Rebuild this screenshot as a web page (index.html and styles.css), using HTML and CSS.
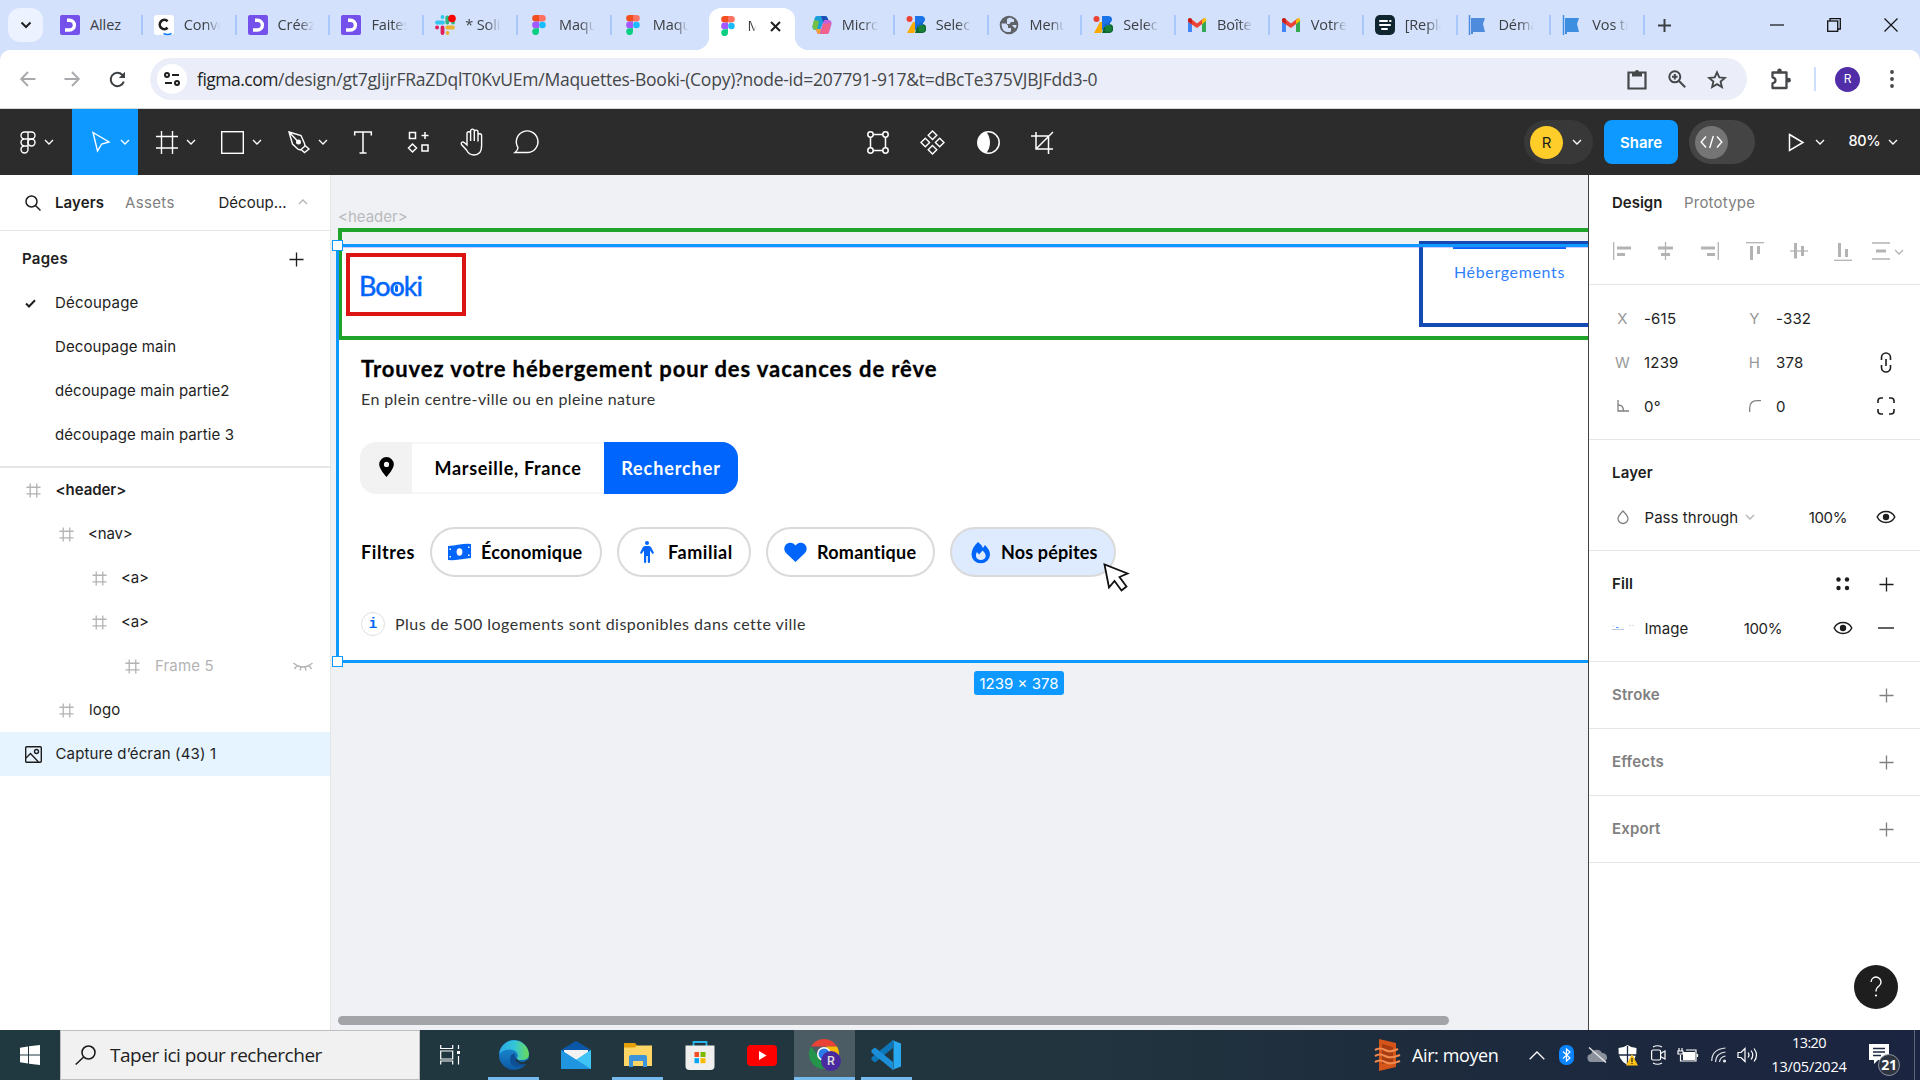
FILE: index.html
```html
<!DOCTYPE html>
<html lang="fr">
<head>
<meta charset="utf-8">
<title>Maquettes Booki</title>
<link rel="stylesheet" href="styles.css">
</head>
<body>
<svg class="defs" width="0" height="0">
  <symbol id="chev" viewBox="0 0 10 6"><path d="M1 1l4 4 4-4" fill="none" stroke="currentColor" stroke-width="1.3"/></symbol>
  <symbol id="plus" viewBox="0 0 16 16"><path d="M8 .5v15M.5 8h15" fill="none" stroke="currentColor" stroke-width="1.4"/></symbol>
  <symbol id="hash" viewBox="0 0 16 16"><path d="M4.5 .5v15M11.5 .5v15M.5 4.5h15M.5 11.5h15" fill="none" stroke="#b3b3b3" stroke-width="1.4"/></symbol>
  <symbol id="eye" viewBox="0 0 20 14"><path d="M1.200 7C3 3.400 6.200 1.500 10 1.500S17 3.400 18.800 7C17 10.600 13.800 12.500 10 12.500S3 10.600 1.200 7z" fill="none" stroke="#1e1e1e" stroke-width="1.500"/><circle cx="10" cy="7" r="3.200" fill="#1e1e1e"/></symbol>
  <symbol id="figma" viewBox="0 0 14 20"><path d="M3.500 0H7v6.600H3.500a3.300 3.300 0 0 1 0-6.600z" fill="#f24e1e"/><path d="M7 0h3.500a3.300 3.300 0 0 1 0 6.600H7z" fill="#ff7262"/><path d="M3.500 6.600H7v6.700H3.500a3.300 3.300 0 0 1 0-6.700z" fill="#a259ff"/><circle cx="10.400" cy="10" r="3.300" fill="#1abcfe"/><path d="M3.500 13.300H7v3.300a3.400 3.400 0 1 1-3.500-3.300z" fill="#0acf83"/></symbol>
  <symbol id="oc" viewBox="0 0 20 20"><rect width="20" height="20" rx="2" fill="#7451eb"/><path d="M7 5.200h2.500a4.900 4.900 0 0 1 0 9.800H5" fill="none" stroke="#fff" stroke-width="3.400"/></symbol>
  <symbol id="ads" viewBox="0 0 20 20"><path d="M7 7h6L8 18H1z" fill="#f9ab00"/><path d="M9 1h7a3.500 3.500 0 0 1 2 6l-8 8H9z" fill="#1a73e8"/><path d="M12 9h4a4.500 4.500 0 0 1 0 9H9z" fill="#0d652d"/><path d="M10 11l7-5v9z" fill="#1967d2"/><circle cx="3.500" cy="4" r="3" fill="#ea4335"/><circle cx="15.500" cy="13.500" r="3.500" fill="#188038"/></symbol>
  <symbol id="gmail" viewBox="0 0 20 16"><path d="M1 3v12h4V6z" fill="#4285f4"/><path d="M19 3v12h-4V6z" fill="#34a853"/><path d="M1 2.500L3 1l7 5.500L17 1v4.500l-7 5.500L1 5z" fill="#ea4335"/><path d="M15 3l2-2c2 0 2.500 1.500 2 3l-4 3z" fill="#fbbc04"/><path d="M1 2c1-1.500 3-1 4 0v5L1 4.500z" fill="#c5221f"/></symbol>
  <symbol id="flag" viewBox="0 0 20 20"><path d="M3 3h14l-2 6 2 8H5v2H3z" fill="currentColor"/><path d="M1.500 0v20" stroke="currentColor" stroke-width="1.500"/></symbol>
</svg>

<div class="tabstrip">
  <div class="tabsearch"><svg width="12" height="8" viewBox="0 0 12 8"><path d="M1.500 1.500L6 6l4.500-4.500" fill="none" stroke="#1f1f1f" stroke-width="2"/></svg></div>
  <div class="tab"><svg class="fav"><use href="#oc"/></svg><span>Allez</span></div>
  <div class="tab"><svg class="fav" viewBox="0 0 20 20"><rect width="20" height="20" rx="3" fill="#fff"/><path d="M13.600 6.200A4.600 4.600 0 1 0 13.600 12.800" fill="none" stroke="#1d1d1b" stroke-width="2.600"/><path d="M9.500 18.500q4 2 8 0" fill="none" stroke="#0a7cff" stroke-width="1.700"/></svg><span>Conve</span></div>
  <div class="tab"><svg class="fav"><use href="#oc"/></svg><span>Créez</span></div>
  <div class="tab"><svg class="fav"><use href="#oc"/></svg><span>Faites</span></div>
  <div class="tab"><svg class="fav" viewBox="0 0 20 20" fill="none" stroke-width="3.800" stroke-linecap="round"><path d="M2 7.500h6M7.500 2v.2" stroke="#36c5f0"/><path d="M12.300 2.500v5M18 7.500h.1" stroke="#2eb67d"/><path d="M12.300 12.500h5.700M12.500 18v-.1" stroke="#ecb22e"/><path d="M7.500 12.500v5.500M2 12.500h.1" stroke="#e01e5a"/><circle cx="17" cy="3.500" r="3.800" fill="#f00" stroke="none"/></svg><span>* Soli</span></div>
  <div class="tab"><svg class="fav"><use href="#figma"/></svg><span>Maqu</span></div>
  <div class="tab nosep"><svg class="fav"><use href="#figma"/></svg><span>Maqu</span></div>
  <div class="tab active nosep"><svg class="fav"><use href="#figma"/></svg><span>M</span><svg class="x" width="11" height="11" viewBox="0 0 11 11"><path d="M1 1l9 9M10 1l-9 9" stroke="#1f1f1f" stroke-width="2"/></svg></div>
  <div class="tab"><svg class="fav" viewBox="0 0 20 20"><path d="M5 1h8q2 0 2.500 2L17 6h-5L8 15H4q-4 0-3.500-4L2.500 4Q3 1 5 1z" fill="#1a9fd8"/><path d="M2 5l5 1-2 9q-5 0-4.500-4z" fill="#75c043"/><path d="M9 1h4q2 0 2.500 2L17 7h-6z" fill="#1c4fb5"/><path d="M15 19H7q-2 0-2.500-3L4 14h5l3-9h4q4 0 3.500 4l-2 7q-.5 3-2.500 3z" fill="#c55fd8"/><path d="M11 9l8-1-2 8q-.5 3-2.500 3H9z" fill="#f0628a"/><path d="M4 14h5l-1 5q-3 0-3.500-3z" fill="#f9a12e"/></svg><span>Micro</span></div>
  <div class="tab"><svg class="fav"><use href="#ads"/></svg><span>Selec</span></div>
  <div class="tab"><svg class="fav" viewBox="0 0 20 20"><circle cx="10" cy="10" r="9.300" fill="#5f6368"/><path d="M2.500 8.500h4.500l2 2v2.500h3v3.500q-7 2-9-4zM8 4l3-1.500 4 2v2.500h-3l-1.500 2H8V6z M13 10h4.500q0 2-1.500 3.500z" fill="#d3e1fd"/></svg><span>Menu</span></div>
  <div class="tab"><svg class="fav"><use href="#ads"/></svg><span>Selec</span></div>
  <div class="tab"><svg class="fav"><use href="#gmail"/></svg><span>Boîte</span></div>
  <div class="tab"><svg class="fav"><use href="#gmail"/></svg><span>Votre</span></div>
  <div class="tab"><svg class="fav" viewBox="0 0 20 20"><rect width="20" height="20" rx="5" fill="#0f2530"/><path d="M5 6h7M15 6h.6M5 10h10M7 14h5" stroke="#fff" stroke-width="2" stroke-linecap="round"/></svg><span>[Repla</span></div>
  <div class="tab c1"><svg class="fav"><use href="#flag"/></svg><span>Déma</span></div>
  <div class="tab c2"><svg class="fav"><use href="#flag"/></svg><span>Vos tr</span></div>
  <svg class="newtab" width="13" height="13" viewBox="0 0 13 13"><path d="M6.500 0v13M0 6.500h13" stroke="#3c4043" stroke-width="2"/></svg>
  <div class="winctl">
    <svg width="14" height="14" viewBox="0 0 14 14"><path d="M0 7h14" stroke="#111" stroke-width="1.200"/></svg>
    <svg width="14" height="14" viewBox="0 0 14 14" fill="none" stroke="#111" stroke-width="1.300"><rect x=".7" y="3" width="10" height="10.300"/><path d="M3 3V.7h10.300V11H11"/></svg>
    <svg width="14" height="14" viewBox="0 0 14 14"><path d="M.5 .5l13 13M13.500 .5l-13 13" stroke="#111" stroke-width="1.200"/></svg>
  </div>
</div>

<div class="navbar-bg"><div class="navbar">
  <svg class="n1" width="16" height="16" viewBox="0 0 16 16"><path d="M15.500 8H1.500M8 1L1.200 8 8 15" fill="none" stroke="#a9aaae" stroke-width="1.900"/></svg>
  <svg class="n2" width="16" height="16" viewBox="0 0 16 16"><path d="M.5 8h14M8 1l6.800 7L8 15" fill="none" stroke="#a9aaae" stroke-width="1.900"/></svg>
  <svg class="n3" width="17" height="17" viewBox="0 0 17 17"><path d="M14.800 10.500A6.700 6.700 0 1 1 13.200 3.800L15 5.600" fill="none" stroke="#3c4043" stroke-width="2"/><path d="M16 .8V7H9.800z" fill="#3c4043"/></svg>
  <div class="omni">
    <div class="site"><svg width="16" height="14" viewBox="0 0 16 14" fill="none" stroke="#1f1f1f" stroke-width="2"><circle cx="3" cy="3" r="2"/><path d="M8 3h7M1 11h7"/><circle cx="13" cy="11" r="2"/></svg></div>
    <span class="url"><b>figma.com</b>/design/gt7gJijrFRaZDqlT0KvUEm/Maquettes-Booki-(Copy)?node-id=207791-917&amp;t=dBcTe375VJBJFdd3-0</span>
    <svg width="20" height="21" viewBox="0 0 20 21"><path d="M1.500 3.500h17v16h-17z" fill="none" stroke="#45474a" stroke-width="2.200"/><path d="M5 3h3a2 2 0 0 1 4 0h3v4.500H5z" fill="#45474a"/></svg>
    <svg width="18" height="18" viewBox="0 0 18 18" fill="none" stroke="#45474a" stroke-width="2"><circle cx="6.800" cy="6.800" r="5.500"/><path d="M11 11l6.200 6.200M6.800 4v5.600M4 6.800h5.600"/></svg>
    <svg width="20" height="19" viewBox="0 0 20 19"><path d="M10 2.300l2.300 5.100 5.500.5-4.200 3.700 1.300 5.500L10 14.200l-4.900 2.900 1.300-5.500L2.200 7.900l5.500-.5z" fill="none" stroke="#45474a" stroke-width="1.900"/></svg>
  </div>
  <svg class="puz" width="22" height="22" viewBox="0 0 22 22"><path d="M2.500 4.500h14V20h-14v-4.700q3-.7 3-3t-3-3z" fill="none" stroke="#45474a" stroke-width="2.300" stroke-linejoin="round"/><circle cx="9.500" cy="2.900" r="2.300" fill="#45474a"/><circle cx="18.500" cy="12.200" r="2.400" fill="#45474a"/></svg>
  <i class="nsep"></i>
  <div class="prof">R</div>
  <svg class="dots" width="4" height="18" viewBox="0 0 4 18" fill="#45474a"><circle cx="2" cy="2" r="1.900"/><circle cx="2" cy="9" r="1.900"/><circle cx="2" cy="16" r="1.900"/></svg>
</div></div>

<div class="ftool">
  <div class="tl">
    <div class="ti w72"><svg width="16" height="23" viewBox="0 0 16 23" fill="none" stroke="#fff" stroke-width="1.400"><path d="M8 1H4.500a3.400 3.400 0 0 0 0 7H8zM8 1h3.500a3.400 3.400 0 0 1 0 7H8zM8 8H4.500a3.400 3.400 0 0 0 0 7H8zM8 15H4.500A3.500 3.500 0 1 0 8 18.500z"/><circle cx="11.500" cy="11.500" r="3.500"/></svg><svg class="cv"><use href="#chev"/></svg></div>
    <div class="ti w66 sel"><svg width="20" height="22" viewBox="0 0 20 22"><path d="M2 1.500L18 11l-7.300 2L6.500 20z" fill="none" stroke="#fff" stroke-width="1.400"/></svg><svg class="cv"><use href="#chev"/></svg></div>
    <div class="ti w66 o1"><svg width="22" height="23" viewBox="0 0 22 23"><path d="M5.500 0v23M16.500 0v23M0 5.500h22M0 17h22" stroke="#fff" stroke-width="1.400"/></svg><svg class="cv"><use href="#chev"/></svg></div>
    <div class="ti w66 o1"><svg width="23" height="23" viewBox="0 0 23 23"><rect x=".7" y=".7" width="21.600" height="21.600" fill="none" stroke="#fff" stroke-width="1.400"/></svg><svg class="cv"><use href="#chev"/></svg></div>
    <div class="ti w66 o1"><svg width="22" height="22" viewBox="0 0 22 22" fill="none" stroke="#fff" stroke-width="1.400"><path d="M1 1l12 3.500 3.500 8 .5 2.500-4.500 4-2.500-.8L4.500 13zM1 1l9 9.500M17 14.500l4 3.500-4.500 3.500-3.500-3"/><circle cx="10.500" cy="11" r="1.800" fill="#fff"/></svg><svg class="cv"><use href="#chev"/></svg></div>
    <div class="ti w55"><svg width="18" height="23" viewBox="0 0 18 23"><path d="M.7 4.500V.9h16.600v3.600M9 1v21M5.500 22h7" fill="none" stroke="#fff" stroke-width="1.500"/></svg></div>
    <div class="ti w55 s1"><svg width="22" height="22" viewBox="0 0 22 22" fill="none" stroke="#fff" stroke-width="1.500"><path d="M1.500 1.500h6v6h-6zM14 14h6v6h-6zM4.500 13l4 4-4 4-4-4zM17 1v7M13.500 4.500h7"/></svg></div>
    <div class="ti w55 s1"><svg width="26" height="28" viewBox="0 0 26 28" fill="none" stroke="#fff" stroke-width="1.400"><path d="M7 16V5.500a1.800 1.800 0 0 1 3.600 0V13 3a1.800 1.800 0 0 1 3.700 0v10V4a1.800 1.800 0 0 1 3.700 0v9.500V7.500a1.800 1.800 0 0 1 3.600 0V18c0 6-3 9-7.600 9-4 0-6-2-7.500-5L1.500 16.500c-1-2 1-3.500 3-1.800L7 17z"/></svg></div>
    <div class="ti w55"><svg width="26" height="24" viewBox="0 0 26 24"><path d="M1 22.500c2-1.500 3-3 3-5A10.800 10.800 0 1 1 14 22.500z" fill="none" stroke="#fff" stroke-width="1.400"/></svg></div>
  </div>
  <div class="tm">
    <svg width="22" height="23" viewBox="0 0 22 23" fill="none" stroke="#fff" stroke-width="1.500"><path d="M6 3.500h10M6 19.500h10M3.500 6v11M18.500 6v11"/><circle cx="3.500" cy="3.500" r="2.700"/><circle cx="18.500" cy="3.500" r="2.700"/><circle cx="3.500" cy="19.500" r="2.700"/><circle cx="18.500" cy="19.500" r="2.700"/></svg>
    <svg width="25" height="25" viewBox="0 0 25 25" fill="none" stroke="#fff" stroke-width="1.400"><path d="M12.500 1l4.300 4.300-4.300 4.300-4.300-4.300zM12.500 15.400l4.300 4.300-4.300 4.300-4.300-4.300zM5.300 8.200l4.300 4.300-4.300 4.300L1 12.500zM19.700 8.200l4.300 4.300-4.300 4.300-4.300-4.300z"/></svg>
    <svg width="23" height="23" viewBox="0 0 23 23"><circle cx="11.500" cy="11.500" r="10.700" fill="none" stroke="#fff" stroke-width="1.500"/><path d="M9.500 1a10.700 10.700 0 0 0 0 21q3.500-5 3.500-10.500T9.500 1z" fill="#fff"/></svg>
    <svg width="23" height="23" viewBox="0 0 23 23" fill="none" stroke="#fff" stroke-width="1.500"><path d="M0 5h17.500v18M5 1v17h17M5 18L22 1"/></svg>
  </div>
  <div class="tr">
    <div class="people"><div class="av">R</div><svg class="cv"><use href="#chev"/></svg></div>
    <div class="share"><span>Share</span></div>
    <div class="dev"><div class="knob"><svg width="23" height="14" viewBox="0 0 23 14"><path d="M6 1.500L1.200 7 6 12.500M17 1.500L21.800 7 17 12.500M13.300 1L9.700 13" fill="none" stroke="#fff" stroke-width="1.400"/></svg></div></div>
    <svg class="play" width="17" height="19" viewBox="0 0 17 19"><path d="M1.500 1.500L15 9.500l-13.500 8z" fill="none" stroke="#fff" stroke-width="1.500"/></svg><svg class="cv"><use href="#chev"/></svg>
    <span class="zoom">80%</span><svg class="cv"><use href="#chev"/></svg>
  </div>
</div>

<div class="main">
  <div class="left">
    <div class="ltabs"><svg width="16" height="16" viewBox="0 0 16 16" fill="none" stroke="#1e1e1e" stroke-width="1.500"><circle cx="6.500" cy="6.500" r="5.500"/><path d="M10.500 10.500l5 5"/></svg><b>Layers</b><span class="as">Assets</span><span class="pg">Découp...</span><svg class="cv up"><use href="#chev"/></svg></div>
    <div class="pages">
      <div class="prow ph"><b>Pages</b><svg class="pl"><use href="#plus"/></svg></div>
      <div class="prow"><svg class="ck" width="11" height="9" viewBox="0 0 11 9"><path d="M1 4.500l3 3L10 1.200" fill="none" stroke="#1e1e1e" stroke-width="2"/></svg><span class="p1">Découpage</span></div>
      <div class="prow"><span>Decoupage main</span></div>
      <div class="prow"><span>découpage main partie2</span></div>
      <div class="prow"><span>découpage main partie 3</span></div>
    </div>
    <div class="layers">
      <div class="lrow d0"><svg class="hs"><use href="#hash"/></svg><b>&lt;header&gt;</b></div>
      <div class="lrow d1 tag"><svg class="hs"><use href="#hash"/></svg><span>&lt;nav&gt;</span></div>
      <div class="lrow d2 tag"><svg class="hs"><use href="#hash"/></svg><span>&lt;a&gt;</span></div>
      <div class="lrow d2 tag"><svg class="hs"><use href="#hash"/></svg><span>&lt;a&gt;</span></div>
      <div class="lrow d3"><svg class="hs"><use href="#hash"/></svg><span>Frame 5</span><svg class="closed" width="20" height="10" viewBox="0 0 20 10"><path d="M.5 2q9.500 8 19 0M4 4.500L1.500 8M8 6l-1 3.500M12 6l1 3.500M16 4.500L18.500 8" fill="none" stroke="#b3b3b3" stroke-width="1.300"/></svg></div>
      <div class="lrow d1"><svg class="hs"><use href="#hash"/></svg><span>logo</span></div>
      <div class="lrow d0 on"><svg class="im" width="17" height="17" viewBox="0 0 17 17" fill="none" stroke="#1e1e1e" stroke-width="1.400"><rect x=".7" y=".7" width="15.600" height="15.600" rx="1"/><circle cx="11.500" cy="5.500" r="2"/><path d="M1 12l4.500-4.500L13.500 16"/></svg><span>Capture d’écran (43) 1</span></div>
    </div>
  </div>

  <div class="canvas">
    <span class="flabel">&lt;header&gt;</span>
    <div class="shot">
      <span class="heb">Hébergements</span>
      <span class="logo">Booki</span><i class="logodot"></i>
      <div class="page">
        <h1><span>Trouvez votre hébergement pour des vacances de rêve</span></h1>
        <p class="sub"><span>En plein centre-ville ou en pleine nature</span></p>
        <div class="search"><div class="pin"><svg width="15" height="20" viewBox="0 0 15 20"><path fill-rule="evenodd" d="M7.500 0A7.300 7.300 0 0 1 14.800 7.300C14.800 11 11 16 7.500 20 4 16 .2 11 .2 7.300A7.300 7.300 0 0 1 7.500 0zm0 4.800a2.600 2.600 0 1 0 0 5.200 2.600 2.600 0 0 0 0-5.200z"/></svg></div><div class="city"><span>Marseille, France</span></div><div class="go"><span>Rechercher</span></div></div>
        <div class="filters"><b class="fl">Filtres</b>
          <div class="pill f1"><svg width="23" height="18" viewBox="0 0 23 18"><path d="M0 3q5.500-.5 11.500-1.500T23 1v14q-5.500.5-11.500 1.500T0 17z" fill="#0065fc"/><ellipse cx="11.500" cy="9" rx="2.900" ry="3.700" fill="#fff"/><path d="M2.200 5.500v1.500M2.200 13v1.500M20.800 3.500V5M20.800 11.500V13" stroke="#fff" stroke-width="1.500"/></svg><b>Économique</b></div>
          <div class="pill f2"><svg width="14" height="22" viewBox="0 0 14 22" fill="#0065fc"><circle cx="7" cy="2" r="2"/><path d="M5 5h4q1.500 0 2.300 1.500L14 12l-1.500 1L10 9.500V21q0 1-1.100 1t-1.100-1v-6H6.200v6q0 1-1.100 1T4 21V9.500L1.500 13 0 12l2.700-5.500Q3.500 5 5 5z"/></svg><b>Familial</b></div>
          <div class="pill f3"><svg width="23" height="19" viewBox="0 0 23 19"><path d="M11.500 19L2 10C-3 4 4-3.500 10 1l1.500 1.500L13 1c6-4.500 13 3 8 9z" fill="#0065fc"/></svg><b>Romantique</b></div>
          <div class="pill f4"><svg width="19" height="21" viewBox="0 0 19 21"><path d="M7 0q4 3 5 6l2-3q5 5 5 9.500A9 8.500 0 0 1 .500 12.500Q.5 6 7 0z" fill="#0065fc"/><path d="M6 10l2 2.500 3.500-4q3.500 3 3.200 6A5 4.500 0 0 1 5 14.500Q4.500 12 6 10z" fill="#deebff"/></svg><b>Nos pépites</b></div>
        </div>
        <div class="info"><i>i</i><span>Plus de 500 logements sont disponibles dans cette ville</span></div>
      </div>
      <svg class="cursor" width="28" height="29" viewBox="0 0 28 29"><path d="M1.500 1.500l4.500 23 5.500-6.500 7 9.500 5-4-7-9.500 8-3.500z" fill="#fff" stroke="#111" stroke-width="1.800"/></svg>
    </div>
    <div class="green"></div><div class="navy"></div><div class="red"></div><i class="under"></i>
    <div class="selbox"></div><i class="hd a"></i><i class="hd b"></i>
    <div class="badge"><span>1239 × 378</span></div>
    <i class="scroll"></i>
  </div>

  <div class="right">
    <div class="rtabs"><b>Design</b><span>Prototype</span></div>
    <div class="align">
      <svg viewBox="0 0 18 18"><path d="M.7 0v18"/><path class="k" d="M4 6h14M4 12.500h8"/></svg>
      <svg viewBox="0 0 18 18"><path d="M8.500 0v18"/><path class="k" d="M1 6h15M4 12.500h9"/></svg>
      <svg viewBox="0 0 18 18"><path d="M17.300 0v18"/><path class="k" d="M0 6h14M6 12.500h8"/></svg>
      <svg viewBox="0 0 18 18"><path d="M0 .7h18"/><path class="k" d="M5.500 4v14M12.500 4v8"/></svg>
      <svg viewBox="0 0 18 18"><path d="M0 9h18"/><path class="k" d="M5.500 1v15.500M12.500 4v10"/></svg>
      <svg viewBox="0 0 18 18"><path d="M0 18.300h18"/><path class="k" d="M5.500 1v14M12.500 7v8"/></svg>
      <svg class="last" viewBox="0 0 18 18"><path d="M0 1h18M0 17h18"/><path class="k" d="M4 9h10"/></svg>
      <svg class="cv"><use href="#chev"/></svg>
    </div>
    <div class="sec">
      <div class="g"><em>X</em><span>-615</span><em>Y</em><span>-332</span></div>
      <div class="g"><em>W</em><span>1239</span><em>H</em><span>378</span><svg width="12" height="21" viewBox="0 0 12 21" fill="none" stroke="#1e1e1e" stroke-width="1.600"><path d="M1.500 8V5.500a4.500 4.500 0 0 1 9 0V8M1.500 13v2.500a4.500 4.500 0 0 0 9 0V13M6 7v7"/></svg></div>
      <div class="g"><em><svg width="12" height="12" viewBox="0 0 12 12" fill="none" stroke="#808080" stroke-width="1.300"><path d="M1 0v11h11M1 5q5.500 0 5.500 6"/></svg></em><span>0°</span><em><svg width="12" height="12" viewBox="0 0 12 12"><path d="M.7 12V8Q.7 .7 8 .7h4" fill="none" stroke="#808080" stroke-width="1.300"/></svg></em><span>0</span><svg width="18" height="18" viewBox="0 0 18 18" fill="none" stroke="#1e1e1e" stroke-width="1.600"><path d="M1 6V4q0-3 3-3h2M12 1h2q3 0 3 3v2M17 12v2q0 3-3 3h-2M6 17H4q-3 0-3-3v-2"/></svg></div>
    </div>
    <div class="sec">
      <div class="h"><b>Layer</b></div>
      <div class="r"><svg class="drop" width="12" height="14" viewBox="0 0 12 14"><path d="M6 1Q1 6 1 8.500a5 5 0 0 0 10 0Q11 6 6 1z" fill="none" stroke="#808080" stroke-width="1.300"/></svg><span class="nm">Pass through</span><svg class="cv"><use href="#chev"/></svg><span class="pct">100%</span><svg class="ey"><use href="#eye"/></svg></div>
    </div>
    <div class="sec">
      <div class="h"><b>Fill</b><svg class="four" width="14" height="14" viewBox="0 0 14 14" fill="#1e1e1e"><circle cx="2.500" cy="2.500" r="2.200"/><circle cx="11" cy="2.500" r="2.200"/><circle cx="2.500" cy="11" r="2.200"/><circle cx="11" cy="11" r="2.200"/></svg><svg class="pl"><use href="#plus"/></svg></div>
      <div class="r"><svg class="thumb" width="22" height="8" viewBox="0 0 22 8" stroke-width="1"><path d="M0 2h3M17 1.500h2M20 1.500h2" stroke="#ddd"/><path d="M4 3.500h2.500" stroke="#4d94ff"/><path d="M0 5.500h12" stroke="#b9c6dc"/></svg><span class="nm">Image</span><span class="pct two">100%</span><svg class="ey"><use href="#eye"/></svg><svg class="mn" width="16" height="2" viewBox="0 0 16 2"><path d="M0 1h16" stroke="#1e1e1e" stroke-width="1.400"/></svg></div>
    </div>
    <div class="sec dim"><div class="h"><b>Stroke</b><svg class="pl"><use href="#plus"/></svg></div></div>
    <div class="sec dim"><div class="h"><b>Effects</b><svg class="pl"><use href="#plus"/></svg></div></div>
    <div class="sec dim"><div class="h"><b>Export</b><svg class="pl"><use href="#plus"/></svg></div></div>
    <div class="help"><svg width="12" height="22" viewBox="0 0 12 22"><path d="M1 6a5 5 0 1 1 8 4Q6 12 6 15.500" fill="none" stroke="#fff" stroke-width="1.400"/><circle cx="6" cy="19.500" r="1.100" fill="#fff"/></svg></div>
  </div>
</div>

<div class="taskbar">
  <div class="start"><svg width="20" height="20" viewBox="0 0 20 20" fill="#fff"><path d="M0 2.700L8 1.500V9.500H0zM9 1.300L20 0v9.500H9zM0 10.500h8v8L0 17.300zM9 10.500h11V20L9 18.700z"/></svg></div>
  <div class="tsearch"><svg width="21" height="20" viewBox="0 0 21 20" fill="none" stroke="#1a1a1a" stroke-width="1.600"><circle cx="13.500" cy="7.500" r="6.500"/><path d="M8.700 12L.7 19.500"/></svg><span>Taper ici pour rechercher</span></div>
  <div class="tb w60"><svg width="20" height="20" viewBox="0 0 20 20" fill="none" stroke="#fff" stroke-width="1.200"><path d="M.7 0v3.500h12V0M.7 19.500v-3.500h12v3.500M.7 6h12v8H.7zM18.500 0v4M18.500 11v8.500"/><path d="M17 7.500h3" stroke-width="3"/></svg></div>
  <div class="tb w62 ma run"><svg width="30" height="30" viewBox="0 0 30 30"><defs><linearGradient id="e1" x1="0" x2="1"><stop offset="0" stop-color="#2ba8e8"/><stop offset=".5" stop-color="#33c5d9"/><stop offset="1" stop-color="#6bdc55"/></linearGradient><linearGradient id="e2" x1="0" x2="0" y1="0" y2="1"><stop offset="0" stop-color="#1e96dc"/><stop offset="1" stop-color="#0c59a4"/></linearGradient></defs><circle cx="15" cy="15" r="15" fill="url(#e2)"/><path d="M.5 12A15 15 0 0 1 30 14q0 6-7.500 6-5 0-5-1.500 2-2 1-4.500-2-4.500-8-4.500Q4 9.500.5 14z" fill="url(#e1)"/><path d="M17.500 18.500q-2-1-1.500-5-5 0-5 6 0 7 8 7.500 5 0 8.500-4.500-5 2-10-4z" fill="#0e4f96"/><path d="M17.500 18.500q2 4 7 3.500l5.500-3v4l-3 1q-5 1-8.500-1.500t-1-4z" fill="#21353f"/></svg></div>
  <div class="tb w62"><svg width="30" height="29" viewBox="0 0 30 29"><path d="M0 9L15 0l15 9v6H0z" fill="#0a57a8"/><path d="M3 9h24v10H3z" fill="#f2f2f2"/><path d="M0 9l15 10L30 9v19H0z" fill="#29b2ee"/><path d="M0 28l15-9 15-10v19z" fill="#3fc4f5"/><path d="M0 9l30 19H0z" fill="#2196e0"/></svg></div>
  <div class="tb w62 run"><svg width="28" height="24" viewBox="0 0 28 24"><path d="M0 0h11l2.500 3H28v20H0z" fill="#e59f0b"/><path d="M0 4.500h11l2-2h15V23H0z" fill="#ffd666"/><path d="M5 24V14q0-2 2-2h14q2 0 2 2v10h-4v-6H9v6z" fill="#3d94db"/></svg></div>
  <div class="tb w62"><svg width="30" height="29" viewBox="0 0 30 29"><path d="M8.500 6V1h13v5" fill="none" stroke="#29b5ea" stroke-width="1.800"/><path d="M.5 4.500h29V25q0 4-4 4h-21q-4 0-4-4z" fill="#efefef"/><path d="M9.500 11H14v5H9.500z" fill="#f25022"/><path d="M15.500 11h5v5h-5z" fill="#7fba00"/><path d="M9.500 17.200H14v5H9.500z" fill="#00a4ef"/><path d="M15.500 17.200h5v5h-5z" fill="#ffb900"/></svg></div>
  <div class="tb w62"><svg width="30" height="21" viewBox="0 0 30 21"><rect width="30" height="21" rx="4" fill="#f00"/><path d="M12 6v9l7.500-4.500z" fill="#fff"/></svg></div>
  <div class="tb w61 run cur"><svg width="32" height="32" viewBox="0 0 32 32"><path d="M2 7.500A15 15 0 0 1 28 7.500H15z" fill="#ea4335"/><path d="M28 7.500A15 15 0 0 1 15 30l5-14-3-8.500z" fill="#fbbc04"/><path d="M2 7.500A15 15 0 0 0 15 30l5-9-9-2z" fill="#25944b"/><circle cx="15" cy="15" r="7" fill="#fff"/><circle cx="15" cy="15" r="5.500" fill="#2a7de8"/><circle cx="22" cy="22" r="10" fill="#4a2a9f"/><text x="22" y="26.300" text-anchor="middle" font-family="Inter" font-weight="600" font-size="12" fill="#ddd">R</text></svg></div>
  <div class="tb w62 vs run"><svg width="30" height="30" viewBox="0 0 30 30"><path d="M22 0l0 8L4 22.500 .5 20v-2.500z" fill="#0d76b8"/><path d="M22 30v-8L4 7.500.5 10v2.500z" fill="#1a8fd8"/><path d="M21 0l9 3.500v23L21 30q1.500-.5 1.500-3V3q0-2.500-1.500-3z" fill="#28a8f0"/></svg></div>
  <div class="wx"><svg width="26" height="32" viewBox="0 0 26 32"><path d="M4 0l17 4v24L4 32z" fill="#d5541a"/><path d="M7 5l11 3v15L7 25z" fill="#a63c10"/><path d="M0 11q5-3 10 0t13-1M0 17q5-3 10 0t15-1M0 23q5-3 10 0t15-1" fill="none" stroke="#f08a4f" stroke-width="2.200"/></svg><span>Air: moyen</span></div>
  <div class="tray">
    <svg width="16" height="9" viewBox="0 0 16 9"><path d="M.7 8.300L8 1l7.300 7.300" fill="none" stroke="#fff" stroke-width="1.300"/></svg>
    <svg class="t2" width="15" height="20" viewBox="0 0 15 20"><rect width="15" height="20" rx="7" fill="#0a84ff"/><path d="M4 6.500l7 6.500-3.500 3V4L11 7l-7 6.500" fill="none" stroke="#fff" stroke-width="1.200"/></svg>
    <svg class="t3" width="20" height="16" viewBox="0 0 20 16"><path d="M5 15a4 4 0 0 1-1-8 6 6 0 0 1 11-1 4.500 4.500 0 0 1 1 9z" fill="#8a919c"/><path d="M2 .5L19 15.500" stroke="#e6e6e6" stroke-width="1.400"/></svg>
    <svg class="t4" width="20" height="21" viewBox="0 0 20 21"><path d="M9.500 0q4 3 9 3 1 12-9 17Q-.5 15 .5 3q5 0 9-3z" fill="#fff"/><path d="M9.500 1v18M.5 10h18" stroke="#1d2940" stroke-width="1.300"/><path d="M14 9l6 11.500H8z" fill="#fdc116"/><path d="M14 13v4M14 18v1" stroke="#222" stroke-width="1.200"/></svg>
    <svg class="t5" width="15" height="20" viewBox="0 0 15 20" fill="none" stroke="#fff" stroke-width="1.200"><rect x=".6" y="5" width="9" height="10" rx="1.500"/><path d="M9.500 8.500l4.500-2.500v8L9.500 11.500M2 2q4.500-2.500 9 0M2 18q4.500 2.500 9 0"/></svg>
    <svg class="t6" width="21" height="14" viewBox="0 0 21 14"><path d="M6 4h12v8H6z" fill="#fff"/><path d="M3.500 7v6h15.500V2H9M20.500 6v3M1 3h5v3H1zM2 0v3M5 0v3" fill="none" stroke="#fff" stroke-width="1.200"/></svg>
    <svg class="t7" width="15" height="16" viewBox="0 0 15 16" fill="none" stroke="#dfe2e7" stroke-width="1.200"><path d="M.7 14Q1 2 14.500 1M4.500 15Q5 6 14.500 5M8.500 15q.5-5 6-6"/><circle cx="13.500" cy="14" r="1" fill="#fff"/></svg>
    <svg class="t8" width="21" height="16" viewBox="0 0 21 16" fill="none" stroke="#fff" stroke-width="1.200"><path d="M1 5.500h3L8 1.500v13l-4-4H1zM11 5.500q2 2.500 0 5M14 3.500q3.500 4.500 0 9M17 1.500q5 6.500 0 13"/></svg>
  </div>
  <div class="clock"><span>13:20</span><span>13/05/2024</span></div>
  <div class="notif"><svg width="20" height="20" viewBox="0 0 20 20"><path d="M0 0h20v16H9l-4 4v-4H0z" fill="#fff"/><path d="M4 4.500h12M4 8h12M4 11.500h8" stroke="#1d2940" stroke-width="1.300"/></svg><b>21</b></div>
  <i class="desk"></i>
</div>
</body>
</html>
```
FILE: styles.css
```css
* { box-sizing: border-box; }
body { margin: 0; width: 1920px; height: 1080px; overflow: hidden; display: flex; flex-direction: column; font: 15px/1 Inter, "Liberation Sans", sans-serif; color: #1e1e1e; background: #fff; }
svg { display: block; flex: none; overflow: visible; }
.defs { display: none; }
b { font-weight: 600; }
i, em { font-style: normal; }
.cv { width: 10px; height: 6px; }

/* browser tabs */
.tabstrip { height: 50px; background: #d3e1fd; display: flex; align-items: center; font: 15px/20px "Open Sans", "Noto Sans", sans-serif; color: #3c4043; flex: none; }
.tabsearch { width: 35px; height: 34px; margin: 0 4.600px 0 8px; border-radius: 12px; background: #ecf2ff; display: grid; place-items: center; }
.tab { width: 95.300px; margin-right: -1.500px; height: 20px; padding-left: 12.400px; display: flex; gap: 10px; border-right: 2.500px solid #a8c7fa; flex: none; }
.tab.nosep { border-color: transparent; }
.tab span { width: 36px; overflow: hidden; white-space: nowrap; font-size: 14.500px; letter-spacing: -.1px; mask-image: linear-gradient(90deg, #000 60%, transparent); }
.tab:nth-child(2) span { mask-image: none; }
.fav { width: 20px; height: 20px; }
.tab.active { background: #fff; height: 42px; align-self: flex-end; align-items: center; width: 86.400px; margin: 0 4.500px 0 4.400px; padding: 0 0 6px 9px; border: 0; border-radius: 12px 12px 0 0; position: relative; gap: 8px; }
.tab.active::before, .tab.active::after { content: ""; position: absolute; bottom: 0; width: 14px; height: 14px; }
.tab.active::before { left: -14px; background: radial-gradient(circle at 0 0, transparent 14px, #fff 14.500px); }
.tab.active::after { right: -14px; background: radial-gradient(circle at 100% 0, transparent 14px, #fff 14.500px); }
.tab.active span { width: 8px; margin-right: 6px; margin-left: 2px; }
.c1 { color: #4f8bdc; } .c2 { color: #3d8de0; }
.c1 span, .c2 span { color: #3c4043; }
.newtab { margin-left: 14px; }
.winctl { margin-left: auto; display: flex; gap: 43px; margin-right: 22px; }

/* address bar */
.navbar-bg { background: #d3e1fd; height: 59px; flex: none; }
.navbar { background: #fff; height: 59px; border-bottom: 1px solid #d5d9dc; border-radius: 10px 10px 0 0; display: flex; align-items: center; }
.n1 { margin-left: 20px; } .n2 { margin-left: 28px; } .n3 { margin-left: 29px; }
.omni { width: 1597px; height: 42px; margin-left: 24px; border-radius: 21px; background: #ebeef8; display: flex; align-items: center; padding: 0 20px 0 7px; gap: 21px; }
.site { width: 30px; height: 30px; border-radius: 50%; background: #fff; display: grid; place-items: center; }
.url { font: 17.500px/24px "Open Sans", "Noto Sans", sans-serif; letter-spacing: -.24px; color: #45474a; margin: 0 auto 0 -11px; white-space: nowrap; }
.url b { font-weight: 400; color: #1f1f1f; letter-spacing: -.5px; }
.puz { margin-left: 23px; }
.nsep { width: 2px; height: 24px; background: #cfdffb; margin-left: 22px; }
.prof { width: 25px; height: 25px; border-radius: 50%; background: #512da8; color: #fff; font-size: 12px; display: grid; place-items: center; margin-left: 19px; }
.dots { margin-left: 30px; }

/* editor toolbar */
.ftool { height: 66px; background: #2c2c2c; color: #fff; display: grid; grid-template-columns: 867px 187px 1fr; align-items: center; flex: none; }
.tl, .tm, .tr { display: flex; align-items: center; }
.tm { justify-content: space-between; }
.ti { height: 66px; display: flex; align-items: center; justify-content: center; gap: 8px; }
.w72 { width: 72px; padding-left: 2px; } .w66 { width: 66px; } .w55 { width: 54.500px; }
.sel { background: #0d99ff; gap: 9px; padding-left: 10px; }
.o1 { padding-left: 9px; gap: 8px; }
.s1 { padding-left: 2px; }
.tr { padding-left: 470px; }
.people { width: 69px; height: 44px; border-radius: 22px; background: #383838; display: flex; align-items: center; padding-left: 6px; gap: 9px; }
.av { width: 33px; height: 33px; border-radius: 50%; background: #ffcd29; color: #1e1e1e; display: grid; place-items: center; font-size: 15px; }
.share { width: 74px; height: 44px; border-radius: 8px; background: #0d99ff; display: grid; place-items: center; margin-left: 11px; font-weight: 600; }
.dev { width: 66px; height: 44px; border-radius: 22px; background: #444; margin-left: 11px; padding: 5.500px 6px; }
.knob { width: 33px; height: 33px; border-radius: 50%; background: #757575; display: grid; place-items: center; }
.play { margin: 0 10px 0 33px; }
.zoom { margin: 0 8px 1px 23.500px; font-weight: 500; font-size: 14.500px; letter-spacing: -.4px; }

.main { display: grid; grid-template-columns: 331px 1257px 332px; height: 855px; flex: none; }

/* layers panel */
.left { border-right: 1px solid #e6e6e6; }
.ltabs { height: 56px; border-bottom: 1px solid #e6e6e6; display: flex; align-items: center; padding-left: 25px; }
.ltabs b { margin-left: 14px; width: 70px; letter-spacing: .1px; }
.as { color: #808080; width: 93.500px; letter-spacing: .35px; }
.pg { width: 79px; }
.up { transform: scaleY(-1); color: #b3b3b3; margin-top: -2px; }
.pages { padding: 6px 0 9px; border-bottom: 2px solid #e6e6e6; }
.prow { height: 44px; display: flex; align-items: center; padding-left: 55px; letter-spacing: .09px; }
.prow > b, .prow > span, .lrow > b, .lrow > span, .h > b { padding-bottom: 2px; }
.prow:has(.ck) { padding-left: 25px; gap: 19px; letter-spacing: .2px; }
.ph { padding: 0 26px 0 22px; justify-content: space-between; letter-spacing: .25px; }
.pl { width: 15px; height: 15px; }
.lrow { height: 44px; display: flex; align-items: center; gap: 15px; letter-spacing: .14px; }
.tag { letter-spacing: -.15px; }
.hs { width: 15px; height: 15px; }
.d0 { padding-left: 26px; } .d1 { padding-left: 59px; } .d2 { padding-left: 92px; } .d3 { padding-left: 125px; color: #b3b3b3; }
.d0 b { letter-spacing: -.05px; margin-left: -.5px; }
.tag span { margin-left: -1px; }
.closed { margin: 0 17px 0 auto; }
.on { background: #e5f4ff; padding-left: 24.500px; gap: 14px; }

/* canvas: origin is at (331, 175) of the window */
.canvas { position: relative; overflow: hidden; background: #f0f1f5; }
.canvas > * { position: absolute; }
.flabel { left: 7px; top: 34px; color: #b9babd; }
.shot { left: 7px; top: 71px; width: 1260px; height: 415px; background: #fff; font-family: Lato, "Open Sans", sans-serif; }
.green { left: 7px; top: 53px; width: 1300px; height: 112px; border: 4px solid #1fa32b; }
.navy { left: 1088px; top: 66px; width: 200px; height: 86px; border: 4.500px solid #154ab5; }
.red { left: 15px; top: 78px; width: 120px; height: 63px; border: 4px solid #dc1414; }
.under { left: 1122px; top: 72px; width: 113px; height: 2px; background: #0065fc; }
.selbox { left: 5px; top: 69px; width: 1300px; height: 419px; border: 3px solid #0d99ff; box-shadow: inset 0 1px #7b61ff55; }
.hd { width: 11px; height: 11px; background: #fff; border: 1.500px solid #0d99ff; left: 1px; }
.a { top: 65px; } .b { top: 481px; }
.badge { left: 643px; top: 496px; width: 90px; height: 24px; border-radius: 3px; background: #0d99ff; color: #fff; display: grid; place-items: center; }
.scroll { left: 7px; top: 841px; width: 1111px; height: 9px; border-radius: 5px; background: #a3a4a8; }

/* Booki mock-up page */
.heb { position: absolute; left: 1116px; top: 17px; font-size: 16px; letter-spacing: .65px; line-height: 18px; color: #2f7ffc; }
.logo { position: absolute; left: 21px; top: 24px; font-size: 27px; letter-spacing: -1px; line-height: 32px; color: #0065fc; -webkit-text-stroke: .5px #0065fc; }
.logodot { position: absolute; left: 57px; top: 39px; width: 3px; height: 7px; border-radius: 2px; background: #0065fc; }
.page { padding: 110px 0 0 23px; color: #000; }
h1 { margin: 0; font-size: 22px; line-height: 26px; font-weight: 700; letter-spacing: .92px; -webkit-text-stroke: .3px #000; }
.sub { margin: 8px 0 0; font-size: 16px; line-height: 18px; color: #333; letter-spacing: .4px; }
.search { width: 378px; height: 52px; margin-top: 34px; display: flex; margin-left: -1px; font-size: 18px; font-weight: 700; letter-spacing: .68px; }
.pin { width: 52px; background: #f2f2f2; border-radius: 16px 0 0 16px; display: grid; place-items: center; padding-bottom: 2px; }
.city { width: 192px; border: solid #f6f6f6; border-width: 2px 0; display: grid; place-items: center; }
.go { width: 134px; background: #0065fc; color: #fff; border-radius: 0 16px 16px 0; display: grid; place-items: center; letter-spacing: .9px; }
.filters { display: flex; align-items: center; margin-top: 33px; height: 50px; font-size: 18px; }
.filters b { font-weight: 700; }
.fl { width: 69px; letter-spacing: .6px; }
.pill { height: 50px; border: 2px solid #dadada; border-radius: 25px; display: flex; align-items: center; letter-spacing: .25px; white-space: nowrap; }
.f1 { width: 172px; padding-left: 16px; gap: 10px; margin-right: 15px; }
.f2 { width: 134px; padding-left: 21px; gap: 14px; margin-right: 15px; letter-spacing: .55px; }
.f3 { width: 169px; padding-left: 16px; gap: 10px; margin-right: 15px; }
.f4 { width: 166px; padding-left: 19px; gap: 11px; background: #deebff; letter-spacing: .15px; }
.info { display: flex; align-items: center; gap: 10px; margin-top: 35px; font-size: 16px; color: #333; letter-spacing: .47px; }
.info span { padding-bottom: 1px; }
.info i { width: 24px; height: 24px; border: 1.500px solid #e0e0e0; border-radius: 50%; color: #0065fc; display: grid; place-items: center; font: bold 14px/1 "Liberation Mono", monospace; letter-spacing: 0; }
.cursor { position: absolute; left: 765px; top: 317px; }

/* properties panel */
.right { border-left: 1px solid #444; position: relative; }
.rtabs { height: 55px; display: flex; align-items: center; padding-left: 23px; }
.rtabs b { width: 72px; } .rtabs span { color: #808080; letter-spacing: .2px; }
.align { height: 55px; border-bottom: 1px solid #e6e6e6; padding: 12px 0 0 24px; display: flex; gap: 26.200px; color: #b3b3b3; }
.align svg:not(.cv) { width: 18px; height: 18px; stroke: #b3b3b3; fill: none; stroke-width: 1.300; }
.align .k { stroke-width: 3; }
.align .last { margin-left: -6px; }
.align .cv { margin: 7px 0 0 -22px; }
.sec { border-bottom: 1px solid #e6e6e6; padding: 11px 0; }
.g { height: 44px; display: grid; grid-template-columns: 21px 111px 21px 91px 30px; align-items: center; padding-left: 23px; letter-spacing: .2px; }
.g em { color: #999; display: grid; place-items: center; }
.g span { padding-left: 11px; }
.g > svg { justify-self: center; margin-left: 29px; }
.h, .r { height: 44px; display: flex; align-items: center; padding: 0 26px 0 23px; }
.h b { margin-right: auto; letter-spacing: .15px; }
.four { margin-right: 29px; }
.drop { margin: 0 16px 0 4.500px; }
.nm { letter-spacing: .05px; }
.nm + .cv { color: #b3b3b3; margin-left: 7px; }
.pct { margin-left: auto; letter-spacing: -.4px; }
.ey { width: 20px; height: 14px; margin: 0 -2px 0 29px; }
.thumb { margin-right: 10.500px; }
.two + .ey { margin: 0 25px 0 51px; }
.dim { color: #808080; }
.help { position: absolute; left: 265px; top: 790px; width: 44px; height: 44px; border-radius: 50%; background: #1e1e1e; display: grid; place-items: center; }

/* taskbar */
.taskbar { height: 50px; background: linear-gradient(90deg, #20383f 0%, #22353f 55%, #1d2b3d 75%, #1b2440 100%); display: flex; align-items: center; font-family: "Open Sans", "Noto Sans", sans-serif; color: #fff; flex: none; }
.start { width: 60px; display: grid; place-items: center; }
.tsearch { width: 360px; height: 50px; background: #f1f1f1; border: 1px solid #bfbfbf; display: flex; align-items: center; padding-left: 14px; gap: 14px; color: #222; font-size: 19px; letter-spacing: -.48px; }
.tb { height: 50px; display: grid; place-items: center; position: relative; }
.w60 { width: 60px; } .w62 { width: 62px; } .w61 { width: 61px; }
.ma { margin-left: 3px; }
.run::after { content: ""; position: absolute; left: 5px; right: 6px; bottom: 0; height: 3px; background: #76b9ed; }
.cur { background: #4b5c65; margin-left: 1px; } .cur::after { left: 0; right: 0; }
.vs::after { left: 6px; right: 5px; }
.wx { display: flex; align-items: center; gap: 11px; margin-left: 458px; font-size: 18px; letter-spacing: -.4px; width: 122px; white-space: nowrap; }
.tray { display: flex; align-items: center; margin-left: 32px; width: 242px; }
.t2 { margin-left: 14px; } .t3 { margin-left: 13px; } .t4 { margin-left: 11px; } .t5 { margin-left: 13px; } .t6 { margin-left: 11px; } .t7 { margin-left: 13px; } .t8 { margin-left: 11px; }
.clock { display: flex; flex-direction: column; align-items: center; font-size: 14.500px; line-height: 24px; width: 76px; letter-spacing: -.15px; }
.clock span:first-child { letter-spacing: -.6px; }
.notif { position: relative; margin: -2px 0 0 22px; }
.notif b { position: absolute; left: 9px; top: 10px; width: 22px; height: 22px; border: 1px solid #8b929d; border-radius: 50%; background: #2f3540; display: grid; place-items: center; font: 700 14px/1 "Open Sans", sans-serif; letter-spacing: -.3px; }
.desk { width: 1px; height: 50px; background: #5e6678; margin-left: 25px; }
```
